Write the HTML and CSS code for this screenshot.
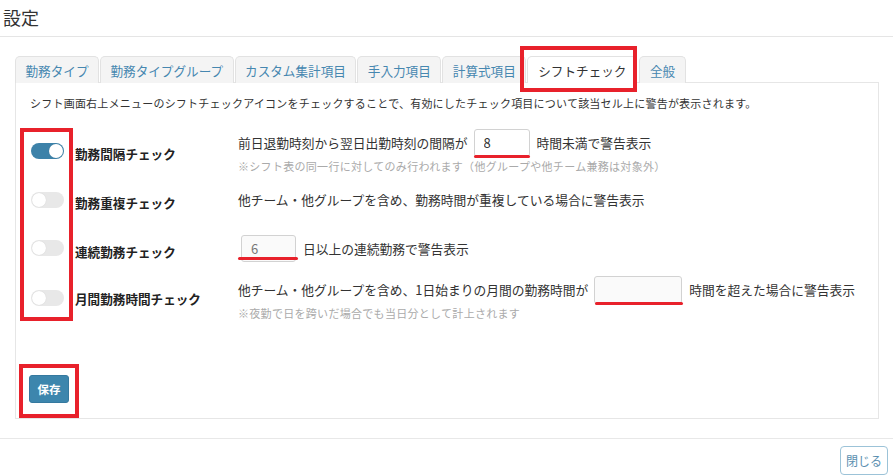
FILE: index.html
```html
<!DOCTYPE html>
<html lang="ja">
<head>
  <meta charset="UTF-8">
  <title>設定</title>
  <link rel="stylesheet" href="styles.css">
</head>
<body>

  <div class="modal">
    <div class="modal-header">
      <h3>設定</h3>
    </div>

    <div class="modal-body">
      <ul class="tabs">
        <li class="tab">勤務タイプ</li>
        <li class="tab">勤務タイプグループ</li>
        <li class="tab">カスタム集計項目</li>
        <li class="tab">手入力項目</li>
        <li class="tab">計算式項目</li>
        <li class="tab active">シフトチェック</li>
        <li class="tab">全般</li>
      </ul>

      <div class="panel">
        <p class="intro">シフト画面右上メニューのシフトチェックアイコンをチェックすることで、有効にしたチェック項目について該当セル上に警告が表示されます。</p>

        <div class="check-list">
          <div class="check-row row-1">
            <span class="switch on"></span>
            <span class="check-label">勤務間隔チェック</span>
            <div class="check-body">
              <div class="line">前日退勤時刻から翌日出勤時刻の間隔が<span class="field f1"><input type="text" value="8"></span>時間未満で警告表示</div>
              <div class="note">※シフト表の同一行に対してのみ行われます（他グループや他チーム兼務は対象外）</div>
            </div>
          </div>

          <div class="check-row row-2">
            <span class="switch"></span>
            <span class="check-label">勤務重複チェック</span>
            <div class="check-body">
              <div class="line">他チーム・他グループを含め、勤務時間が重複している場合に警告表示</div>
            </div>
          </div>

          <div class="check-row row-3">
            <span class="switch"></span>
            <span class="check-label">連続勤務チェック</span>
            <div class="check-body">
              <div class="line"><span class="field f3"><input type="text" value="6" class="muted"></span>日以上の連続勤務で警告表示</div>
            </div>
          </div>

          <div class="check-row row-4">
            <span class="switch"></span>
            <span class="check-label">月間勤務時間チェック</span>
            <div class="check-body">
              <div class="line">他チーム・他グループを含め、1日始まりの月間の勤務時間が<span class="field f4"><input type="text" value="" class="wide"></span>時間を超えた場合に警告表示</div>
              <div class="note">※夜勤で日を跨いだ場合でも当日分として計上されます</div>
            </div>
          </div>
        </div>

        <button class="btn-save">保存</button>
      </div>
    </div>

    <div class="modal-footer">
      <button class="btn-close">閉じる</button>
    </div>

    <!-- annotation boxes -->
    <div class="mark mark-tab"></div>
    <div class="mark mark-switches"></div>
    <div class="mark mark-save"></div>
  </div>

</body>
</html>
```

FILE: styles.css
```css
* {
  margin: 0;
  padding: 0;
  box-sizing: border-box;
  font-family: "Noto Sans CJK JP", "Noto Sans", sans-serif;
}

body {
  width: 893px;
  height: 476px;
  background: #fff;
  color: #333;
  overflow: hidden;
}

.modal {
  position: relative;
  height: 476px;
}

.modal-header {
  height: 37px;
  border-bottom: 1px solid #e5e5e5;
  padding: 4px 0 0 3px;
}

.modal-header h3 {
  font-size: 18px;
  font-weight: 400;
  line-height: 26px;
  color: #333;
}

.modal-body {
  padding: 19px 15px 0 15px;
}

/* Tabs */
.tabs {
  list-style: none;
  display: flex;
  height: 26px;
  position: relative;
  z-index: 1;
}

.tab {
  height: 27px;
  padding: 0 9.5px;
  margin-right: 1px;
  border: 1px solid #e2e2e2;
  border-bottom: none;
  border-radius: 5px 5px 0 0;
  background: #f4f4f4;
  color: #4687b0;
  font-size: 12.6px;
  line-height: 27px;
  white-space: nowrap;
}

.tab.active {
  background: #fff;
  color: #333;
  border-color: #e2e2e2;
  padding: 0 10px;
  margin-right: 2px;
}

.panel {
  width: 864px;
  height: 337px;
  border: 1px solid #e6e6e6;
  padding: 12px 14px 0 14px;
}

.intro {
  font-size: 11px;
  line-height: 16px;
  letter-spacing: 0.22px;
  color: #333;
  margin-bottom: 15px;
}

/* Check rows */
.check-row {
  display: flex;
  align-items: center;
}

.row-1 { height: 50px; }
.row-2 { height: 47px; }
.row-3 { height: 50px; }
.row-4 { height: 50px; }

.switch {
  position: relative;
  flex: none;
  width: 33px;
  height: 16px;
  margin: 0 11px 0 1px;
  border-radius: 8px;
  background: #e8e8e8;
}

.switch::after {
  content: "";
  position: absolute;
  left: 1px;
  top: 1px;
  width: 14px;
  height: 14px;
  border-radius: 50%;
  background: #fff;
  box-shadow: 0 0 1px rgba(0,0,0,0.15);
}

.switch.on {
  background: #3d82a9;
}

.switch.on::after {
  left: 18px;
}

.check-label {
  flex: none;
  width: 163px;
  font-size: 12.6px;
  font-weight: 700;
  color: #222;
  padding-top: 6px;
}

.row-1 .check-label { padding-top: 4px; }
.row-4 .check-label { padding-top: 0; }

.check-body {
  font-size: 12.75px;
  color: #333;
}

.line {
  display: flex;
  align-items: center;
  min-height: 28px;
  white-space: nowrap;
}

.note {
  font-size: 11px;
  letter-spacing: 0.3px;
  line-height: 16px;
  color: #aaa;
  margin-top: 1px;
}

.field {
  position: relative;
  display: inline-block;
  margin: 0 7px 0 6px;
}

.field input {
  display: block;
  width: 56px;
  height: 28px;
  border: 1px solid #d2d2d2;
  border-radius: 3px;
  padding: 0 9px;
  font-size: 13px;
  color: #333;
  background: #fff;
}

.field input.muted {
  width: 55px;
  height: 27px;
  color: #777;
  background: #fafafa;
}

.field input.wide {
  width: 88px;
  background: #fafafa;
}

.f3 {
  margin: 0 7px 0 3px;
}

/* red underline annotations */
.field::after {
  content: "";
  position: absolute;
  left: 0;
  right: 0;
  bottom: -1px;
  height: 3px;
  border-radius: 2px;
  background: #e8212b;
}

.f3::after {
  left: -3px;
  right: -2px;
  bottom: 2px;
}

.f4::after {
  left: 1px;
  right: -1px;
}

.btn-save {
  display: block;
  margin: 52px 0 0 -1px;
  width: 40px;
  height: 28px;
  border: 1px solid #35799f;
  border-radius: 3px;
  background: #3d86ad;
  color: #fff;
  font-size: 11.5px;
  font-weight: 700;
}

.modal-footer {
  margin-top: 19px;
  border-top: 1px solid #e8e8e8;
  padding: 7px 5px 0 0;
  display: flex;
  justify-content: flex-end;
}

.btn-close {
  width: 48px;
  height: 29px;
  border: 1px solid #9cc3d8;
  border-radius: 4px;
  background: #fff;
  color: #5b8fb0;
  font-size: 12px;
}

/* annotation boxes */
.mark {
  position: absolute;
  border: 4px solid #e8212b;
  z-index: 2;
}

.mark-tab {
  left: 520px;
  top: 46px;
  width: 117px;
  height: 46px;
}

.mark-switches {
  left: 20px;
  top: 128px;
  width: 53px;
  height: 193px;
}

.mark-save {
  left: 19px;
  top: 364px;
  width: 60px;
  height: 54px;
}
```
